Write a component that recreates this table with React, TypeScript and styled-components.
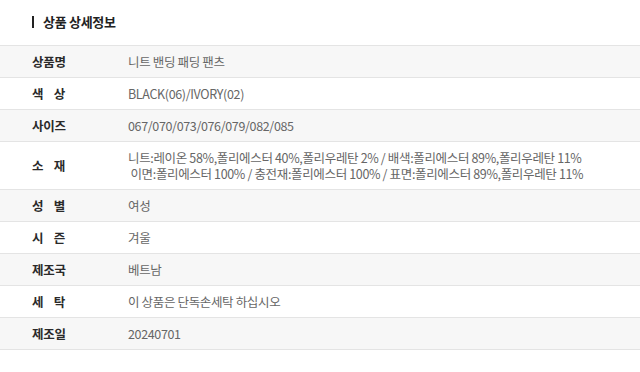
import React from "react";
import styled, { createGlobalStyle } from "styled-components";

interface IDetailRow {
  label: string;
  value: string[];
}

const rows: IDetailRow[] = [
  { label: "상품명", value: ["니트 밴딩 패딩 팬츠"] },
  { label: "색상", value: ["BLACK(06)/IVORY(02)"] },
  { label: "사이즈", value: ["067/070/073/076/079/082/085"] },
  {
    label: "소재",
    value: [
      "니트:레이온 58%,폴리에스터 40%,폴리우레탄 2% / 배색:폴리에스터 89%,폴리우레탄 11%",
      "\u00a0이면:폴리에스터 100% / 충전재:폴리에스터 100% / 표면:폴리에스터 89%,폴리우레탄 11%",
    ],
  },
  { label: "성별", value: ["여성"] },
  { label: "시즌", value: ["겨울"] },
  { label: "제조국", value: ["베트남"] },
  { label: "세탁", value: ["이 상품은 단독손세탁 하십시오"] },
  { label: "제조일", value: ["20240701"] },
];

export default function App() {
  return (
    <Root>
      <GlobalStyle />
      <Title>상품 상세정보</Title>
      <Table>
        {rows.map((row, i) => (
          <Row key={row.label} striped={i % 2 === 0}>
            <LabelCell>
              <Label>
                {row.label.split("").map((ch, j) => (
                  <span key={j}>{ch}</span>
                ))}
              </Label>
            </LabelCell>
            <ValueCell>
              {row.value.map((line) => (
                <ValueLine key={line}>{line}</ValueLine>
              ))}
            </ValueCell>
          </Row>
        ))}
      </Table>
    </Root>
  );
}

const GlobalStyle = createGlobalStyle`
  html, body {
    margin: 0;
    padding: 0;
    background: #ffffff;
  }
  body {
    font-family: "Noto Sans CJK KR", "Noto Sans", sans-serif;
  }
`;

const Root = styled.div`
  width: 640px;
  height: 372px;
  background: #ffffff;
  padding-top: 11px;
  box-sizing: border-box;
`;

const Title = styled.h3`
  margin: 0 0 13px 32px;
  height: 21px;
  display: flex;
  align-items: center;
  gap: 9px;
  font-size: 13px;
  font-weight: 700;
  color: #222222;
  letter-spacing: -0.3px;
  &::before {
    content: "";
    width: 2px;
    height: 12px;
    background: #222222;
  }
`;

const Table = styled.div`
  border-top: 1px solid #e4e4e4;
`;

const Row = styled.div<{ striped: boolean }>`
  display: flex;
  align-items: center;
  min-height: 30.75px;
  border-bottom: 1px solid #e4e4e4;
  background: ${(p) => (p.striped ? "#f7f7f7" : "#ffffff")};
`;

const LabelCell = styled.div`
  width: 128px;
  padding-left: 32px;
  box-sizing: border-box;
  flex-shrink: 0;
`;

const Label = styled.div`
  display: flex;
  justify-content: space-between;
  width: 33px;
  font-size: 12.5px;
  font-weight: 700;
  color: #2a2a2a;
  white-space: nowrap;
  letter-spacing: -0.3px;
`;

const ValueCell = styled.div`
  flex: 1;
  padding: 7.5px 0;
  font-size: 12.5px;
  color: #666666;
  line-height: 16px;
  letter-spacing: -0.35px;
`;

const ValueLine = styled.div`
  white-space: nowrap;
`;
